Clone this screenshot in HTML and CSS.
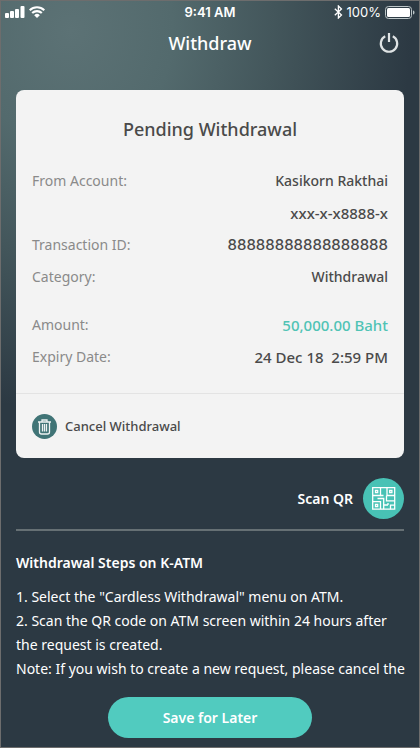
FILE: index.html
```html
<!DOCTYPE html>
<html lang="en">
<head>
<meta charset="utf-8">
<meta name="viewport" content="width=device-width, initial-scale=1">
<title>Withdraw</title>
<link rel="stylesheet" href="styles.css">
</head>
<body>
<div class="screen">
  <div class="status">
    <div class="status-side">
      <svg width="20" height="12" viewBox="0 0 20 12" fill="#fff" aria-hidden="true"><rect x="0" y="7" width="4" height="5" rx="1"/><rect x="5" y="5" width="4" height="7" rx="1"/><rect x="10" y="3" width="4" height="9" rx="1"/><rect x="15.500" y="0" width="4" height="12" rx="1"/></svg>
      <svg width="16" height="12" viewBox="0 0 16 12" aria-hidden="true"><g fill="none" stroke="#fff" stroke-width="2.100"><path d="M.7 4.300a10.400 10.400 0 0 1 14.600 0"/><path d="M3.200 7.100a6.800 6.800 0 0 1 9.600 0"/></g><path fill="#fff" d="M8 12 5.200 9.200a4 4 0 0 1 5.600 0z"/></svg>
    </div>
    <time class="clock">9:41 AM</time>
    <div class="status-side status-right">
      <svg width="9" height="14" viewBox="0 0 9 14" fill="none" stroke="#fff" stroke-width="1.300" aria-hidden="true"><path d="M.8 3.800 7.500 10 4.400 13V1l3.100 3L.8 10.200"/></svg>
      <span>100%</span>
      <svg width="30" height="13" viewBox="0 0 30 13" aria-hidden="true"><rect x=".5" y=".5" width="26" height="12" rx="3" fill="none" stroke="#bcc5c7"/><rect x="2" y="2" width="23" height="9" rx="1.500" fill="#fff"/><path d="M28 4.500c2 .5 2 3.500 0 4z" fill="#bcc5c7"/></svg>
    </div>
  </div>
  <header class="header">
    <h1>Withdraw</h1>
    <button class="power" type="button" aria-label="Log out">
      <svg width="20" height="22" viewBox="0 0 20 22" fill="none" stroke="#dfe3e4" stroke-width="2.200"><path d="M10 1v9M6.200 4.300a8.200 8.200 0 1 0 7.600 0"/></svg>
    </button>
  </header>
  <main class="main">
    <section class="card">
      <h2>Pending Withdrawal</h2>
      <dl class="details">
        <div class="row"><dt>From Account:</dt><dd>Kasikorn Rakthai</dd><dd class="figure">xxx-x-x8888-x</dd></div>
        <div class="row"><dt>Transaction ID:</dt><dd class="reference">88888888888888888</dd></div>
        <div class="row"><dt>Category:</dt><dd>Withdrawal</dd></div>
        <div class="row amount"><dt>Amount:</dt><dd class="figure">50,000.00 Baht</dd></div>
        <div class="row"><dt>Expiry Date:</dt><dd class="figure">24 Dec 18&nbsp; 2:59 PM</dd></div>
      </dl>
      <button class="cancel" type="button">
        <svg width="25" height="25" viewBox="0 0 25 25" aria-hidden="true"><circle cx="12.500" cy="12.500" r="12.500" fill="#407476"/><g fill="none" stroke="#edf2f2" stroke-width="1.300"><path d="M6 8h13M10 7.500V6h5v1.500M7.500 8v10q0 2 2 2h6q2 0 2-2V8M10.500 10v7.500M12.500 10v7.500M14.500 10v7.500"/></g></svg>
        Cancel Withdrawal
      </button>
    </section>
    <button class="scan" type="button">
      Scan QR
      <svg width="41" height="41" viewBox="0 0 41 41" aria-hidden="true"><circle cx="20.500" cy="20.500" r="20.500" fill="#48c2b5"/><g fill="none" stroke="#fff" stroke-width="1.300"><path d="M9.700 9.700h22v21.500h-22zM17.500 9.700v7.800H9.700M24 9.700v7.800h7.700M17.500 31.200v-7.500H9.700"/><path d="M12.500 12.500h2.200v2.200h-2.200zM26.700 12.500h2.200v2.200h-2.200zM12.500 26.300h2.200v2.200h-2.200z"/><path d="M14.500 20.500h6.200v10.700M20.700 27h4.300M23.500 17.500v5.300h8.200M17.500 17.500h3M25 25v2M27.500 31.200v-4h4.200"/></g></svg>
    </button>
    <section class="steps">
      <h3>Withdrawal Steps on K-ATM</h3>
      <p>1. Select the "Cardless Withdrawal" menu on ATM.</p>
      <p>2. Scan the QR code on ATM screen within 24 hours after the request is created.</p>
      <p>Note: If you wish to create a new request, please cancel the</p>
    </section>
  </main>
  <footer class="footer"><button class="save" type="button">Save for Later</button></footer>
</div>
</body>
</html>
```
FILE: styles.css
```css
* { box-sizing: border-box; }
body, h1, h2, h3, p, dl, dd { margin: 0; }
body { font-family: "Noto Sans", sans-serif; font-size: 14px; color: #fff; background: #2c3943; }
button { font: inherit; color: inherit; background: none; border: 0; padding: 0; cursor: pointer; }
svg { display: block; flex: none; }

.screen {
  min-height: 100vh;
  display: flex;
  flex-direction: column;
  border: 1px solid #6d6d6d;
  background: radial-gradient(340px 380px at 70px 30px, #5c7275 0%, #536a6d 30%, #43565b 60%, #2c3943 100%) #2c3943;
}

.status {
  display: grid;
  grid-template-columns: 1fr auto 1fr;
  align-items: center;
  height: 22px;
  padding: 0 4px;
  font-family: Inter, sans-serif;
  font-size: 13px;
}
.status-side { display: flex; align-items: center; gap: 4px; }
.status-right { justify-content: flex-end; }
.clock { font-weight: 600; }

.header {
  display: grid;
  grid-template-columns: 1fr auto 1fr;
  align-items: center;
  height: 40px;
  padding: 0 20px;
}
.header h1 { grid-column: 2; font-size: 18px; font-weight: 500; }
.power { justify-self: end; }

.main { flex: 1; padding: 27px 15px 0; }

.card { background: #f3f3f3; color: #4a4a4a; border-radius: 8px; }
.card h2 {
  padding: 26px 16px 22px;
  font-size: 18px;
  line-height: 27px;
  font-weight: 500;
  text-align: center;
}
.details { padding: 0 16px 20px; line-height: 32px; }
.row { display: grid; grid-template-columns: auto 1fr; }
.row dt { color: #8a8a8a; }
.row dd { grid-column: 2; text-align: right; font-weight: 500; }
.row .figure { font-size: 15px; }
.row .reference { font-family: Inter, sans-serif; font-size: 15px; }
.row.amount { margin-top: 16px; }
.amount dd { color: #50c3b5; }
.cancel {
  display: flex;
  align-items: center;
  gap: 8px;
  width: 100%;
  height: 65px;
  padding: 0 16px;
  border-top: 1px solid #e3e3e3;
  font-size: 13px;
  font-weight: 500;
}

.scan {
  display: flex;
  align-items: center;
  gap: 10px;
  margin: 20px 0 10px auto;
  font-weight: 600;
}

.steps { border-top: 2px solid #667074; padding-top: 20px; line-height: 24px; }
.steps h3 { font-size: 14px; font-weight: 600; margin-bottom: 10px; }
.steps p { margin-right: -8px; }

.footer { display: flex; justify-content: center; padding: 16px 0 9px; }
.save {
  width: 204px;
  height: 41px;
  border-radius: 24px;
  background: #51cbbf;
  font-weight: 600;
}
```
